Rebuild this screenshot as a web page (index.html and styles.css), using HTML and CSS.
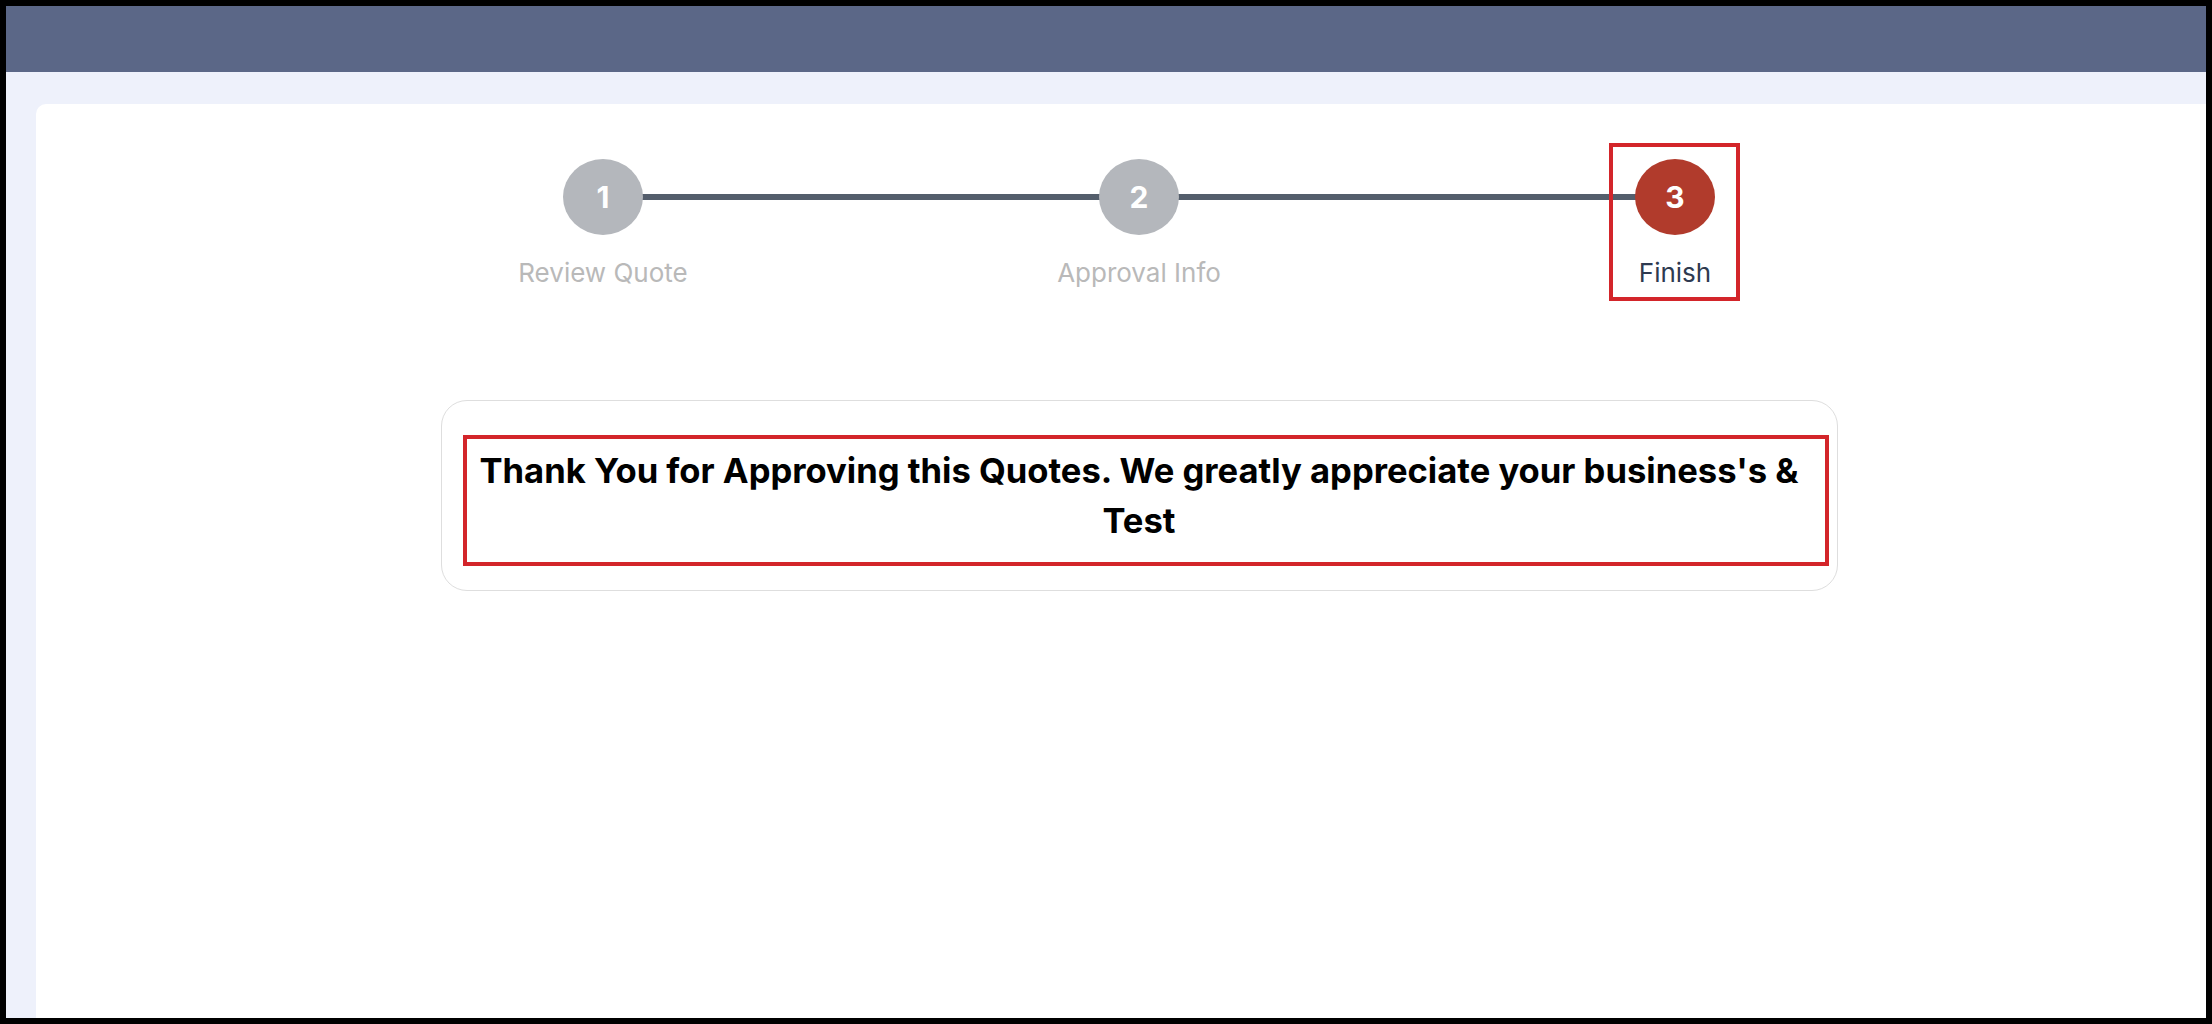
FILE: index.html
```html
<!DOCTYPE html>
<html lang="en">
<head>
<meta charset="utf-8">
<title>Quote Approval - Finish</title>
<link rel="stylesheet" href="styles.css">
</head>
<body>
<div class="frame">
  <header class="topbar"></header>
  <main class="main">
    <section class="card">
      <div class="stepper">
        <div class="step">
          <div class="step-circle">1</div>
          <div class="step-label">Review Quote</div>
        </div>
        <div class="step">
          <div class="step-circle">2</div>
          <div class="step-label">Approval Info</div>
        </div>
        <div class="step step-active">
          <div class="step-circle">3</div>
          <div class="step-label">Finish</div>
          <span class="highlight highlight-step"></span>
        </div>
      </div>
      <div class="message-card">
        <h2 class="message">Thank You for Approving this Quotes. We greatly appreciate your business's &amp; Test</h2>
        <span class="highlight highlight-message"></span>
      </div>
    </section>
  </main>
</div>
</body>
</html>
```

FILE: styles.css
```css
* { box-sizing: border-box; }
html, body { margin: 0; padding: 0; }
body {
  background: #000;
  font-family: "Inter", "Liberation Sans", sans-serif;
}
.frame {
  width: 2212px;
  height: 1024px;
  border: 6px solid #000;
  display: flex;
  flex-direction: column;
  overflow: hidden;
  background: #eef1fb;
}
.topbar {
  height: 66px;
  flex: 0 0 66px;
  background: #5b6787;
}
.main {
  flex: 1;
  display: flex;
  padding: 32px 0 0 30px;
  background: #eef1fb;
}
.card {
  flex: 1;
  background: #fff;
  border-radius: 10px 0 0 0;
  padding: 55px 0 0 36px;
  display: flex;
  flex-direction: column;
  align-items: center;
}
.stepper {
  position: relative;
  display: grid;
  grid-template-columns: repeat(3, 536px);
}
.stepper::before {
  content: "";
  position: absolute;
  left: 268px;
  right: 268px;
  top: 35px;
  height: 6px;
  background: #545e6c;
}
.step {
  position: relative;
  display: flex;
  flex-direction: column;
  align-items: center;
}
.step-circle {
  position: relative;
  width: 80px;
  height: 76px;
  border-radius: 50%;
  background: #b4b7bc;
  color: #fff;
  font-weight: 700;
  font-size: 30px;
  display: flex;
  align-items: center;
  justify-content: center;
}
.step-active .step-circle { background: #b13b2c; }
.step-label {
  margin-top: 22px;
  font-size: 26px;
  color: #b9b9b9;
}
.step-active .step-label { color: #2e3a50; }
.highlight {
  position: absolute;
  border: 4px solid #d3252a;
  pointer-events: none;
}
.highlight-step {
  left: 202px;
  width: 131px;
  top: -16px;
  height: 158px;
}
.message-card {
  position: relative;
  margin-top: 112px;
  width: 1397px;
  height: 191px;
  border: 1px solid #dedede;
  border-radius: 26px;
  padding: 44px 20px 0;
}
.message {
  margin: 0;
  text-align: center;
  font-size: 34.6px;
  line-height: 50px;
  font-weight: 700;
  color: #000;
}
.highlight-message {
  left: 21px;
  top: 34px;
  right: 8px;
  bottom: 24px;
}
```
